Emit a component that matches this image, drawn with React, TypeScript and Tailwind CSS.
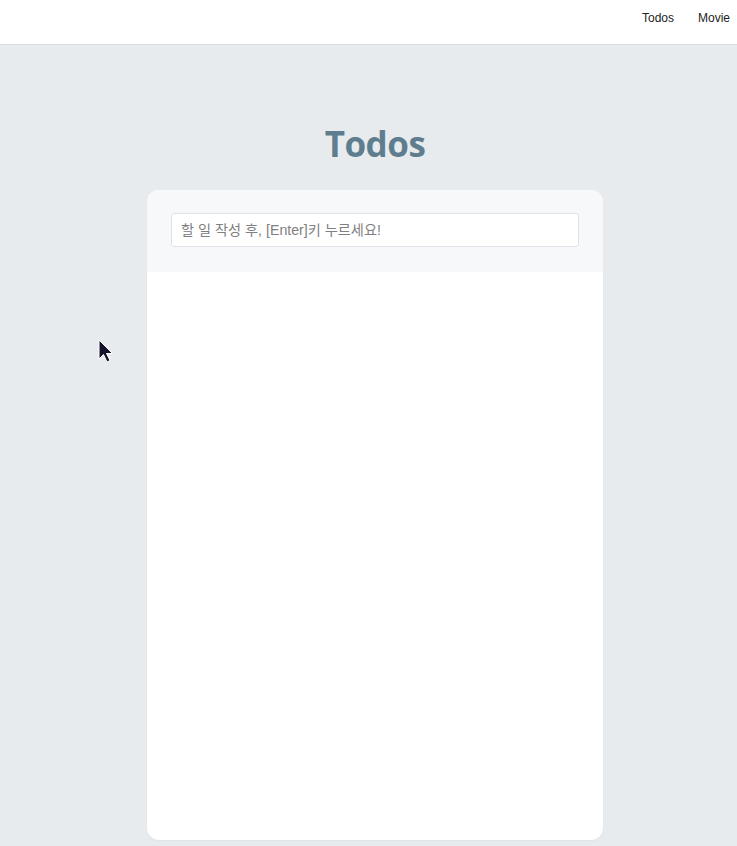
const Cursor = () => (
  <svg
    className="absolute left-[98px] top-[339px]"
    width="16"
    height="26"
    viewBox="0 0 16 26"
  >
    <path
      d="M1 1 L1 20 L5.5 15.5 L9 23 L12 21.5 L8.5 14.5 L14.5 14.5 Z"
      fill="#16122b"
      stroke="#ffffff"
      strokeWidth="1"
    />
  </svg>
);

const App = () => {
  return (
    <div className="relative min-h-[846px] bg-[#e8ebee] font-['Liberation_Sans','Noto_Sans_CJK_KR',sans-serif]">
      <header className="h-[45px] bg-white border-b border-[#dadcdf] flex justify-end items-center pr-[7px]">
        <nav className="flex gap-[24px] text-[12px] text-[#222] pb-[9px]">
          <a href="#">Todos</a>
          <a href="#">Movie</a>
        </nav>
      </header>

      <main className="flex flex-col items-center pt-[77px] pl-[13px]">
        <h1 className="text-[35px] leading-[44px] font-bold text-[#5e7d8f] font-['Open_Sans',sans-serif] tracking-[-0.5px]">
          Todos
        </h1>
        <div className="mt-[24px] w-[456px] h-[650px] bg-white rounded-[12px] overflow-hidden flex flex-col shadow-[0_1px_2px_rgba(0,0,0,0.04)]">
          <div className="bg-[#f7f8f9] h-[82px] px-[24px] pt-[23px]">
            <input
              className="w-full h-[34px] border border-[#dfe3e8] rounded-[3px] bg-white px-[9px] text-[14.2px] text-[#333] placeholder:text-[#808080] outline-none"
              placeholder="할 일 작성 후, [Enter]키 누르세요!"
            />
          </div>
          <ul className="flex-1" />
        </div>
      </main>

      <Cursor />
    </div>
  );
};

export default App;
